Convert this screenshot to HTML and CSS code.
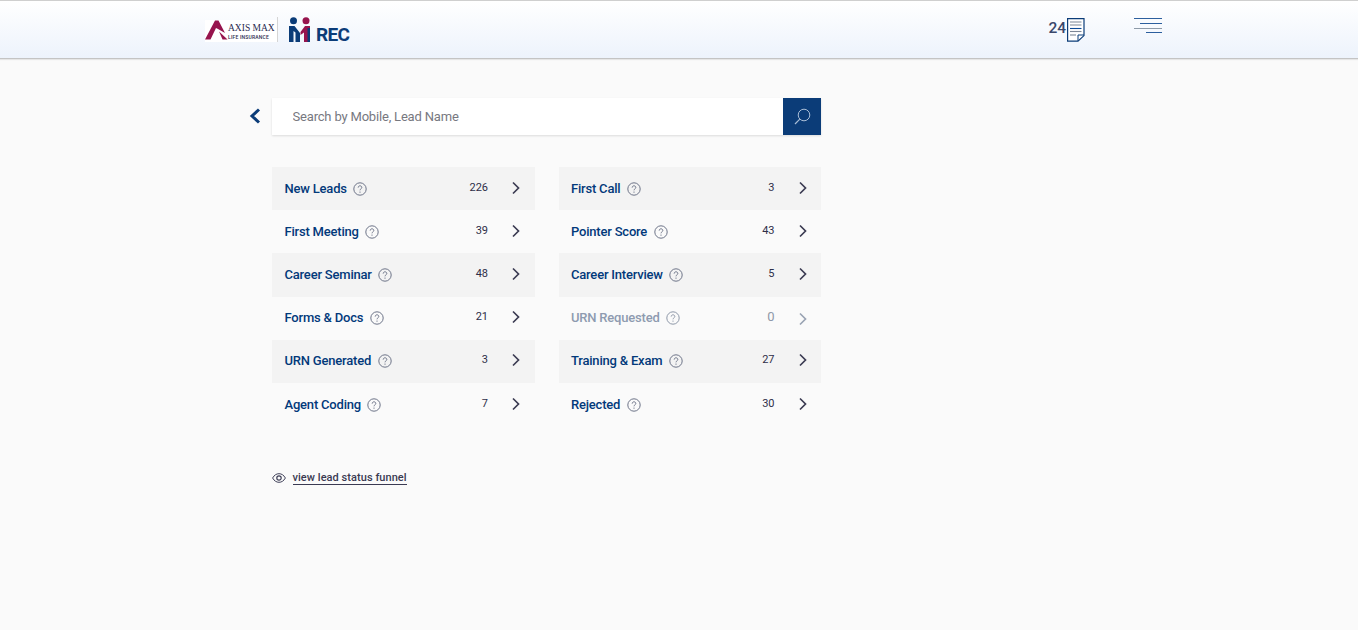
FILE: index.html
```html
<!DOCTYPE html>
<html lang="en">
<head>
<meta charset="utf-8">
<title>Leads</title>
<link rel="stylesheet" href="styles.css">
</head>
<body>
<svg class="defs" width="0" height="0" aria-hidden="true">
  <defs>
    <symbol id="help" viewBox="0 0 14 14">
      <circle cx="7" cy="7" r="6.2" fill="none" stroke="currentColor" stroke-width="1"/>
      <path d="M5.200 5.600C5.200 4.500 6 3.800 7 3.800s1.800.7 1.800 1.700c0 1.300-1.800 1.400-1.800 2.800" fill="none" stroke="currentColor" stroke-width="1"/>
      <circle cx="7" cy="10.100" r=".7" fill="currentColor"/>
    </symbol>
    <symbol id="chev" viewBox="0 0 10 14">
      <path d="M2 1.500 7.500 7 2 12.500" fill="none" stroke="currentColor" stroke-width="1.700"/>
    </symbol>
  </defs>
</svg>
<header class="topbar">
  <div class="brand">
    <div class="axis">
      <svg class="axis-mark" width="23" height="20" viewBox="0 0 23 20"><path d="M0 19.500 10 .5h3.500L20 13l-7-4-2-1-5.500 11.500z" fill="#97144d"/><path d="M14 11.500l8.500 8H17.500z" fill="#97144d"/></svg>
      <div class="axis-text">
        <span class="axis-name">AXIS MAX</span>
        <span class="axis-sub">LIFE INSURANCE</span>
      </div>
    </div>
    <div class="rec">
      <svg width="24" height="25" viewBox="0 0 24 25"><circle cx="4.500" cy="3.800" r="3.500" fill="#0b3c78"/><circle cx="17" cy="3.800" r="3.500" fill="#97144d"/><path d="M0 9h5.500l5.500 7v9H6.500V15.500L4.500 14v11H0z" fill="#0b3c78"/><path d="M21 9h-5l-4.500 6v3l3.500-2.500V25h6z" fill="#97144d"/><path d="M18.500 11H21v14h-2.500z" fill="#0b3c78"/></svg>
      <span class="rec-text">REC</span>
    </div>
  </div>
  <div class="tools">
    <div class="doc-count">
      <span class="count">24</span>
      <svg width="18" height="24" viewBox="0 0 18 24"><path d="M.6.6h16.400v17l-6 5.600H.6z" fill="#fff" stroke="#0b3c78" stroke-width="1.200"/><path d="M11 23v-6h6" fill="none" stroke="#0b3c78"/><path d="M3 4h11.500M3 7h11.500" stroke="#7d8796" stroke-width="1.100"/><path d="M3 10.500h11.500" stroke="#0b4a96" stroke-width="1.100"/><path d="M3 13.500h11.500" stroke="#7d8796" stroke-width="1.100"/><path d="M3 17h6" stroke="#7d8796" stroke-width="1.100"/></svg>
    </div>
    <svg class="menu" width="28" height="16" viewBox="0 0 28 16"><path d="M0 .5h28" stroke="#2c5f9e"/><path d="M6 5.500h22" stroke="#2c5f9e"/><path d="M0 10.500h28" stroke="#8d9aa8"/><path d="M12 14.500h16" stroke="#2c5f9e"/></svg>
  </div>
</header>
<main class="content">
  <div class="search-row">
    <a class="back" href="#"><svg width="12" height="16" viewBox="0 0 12 16"><path d="M10 1.500 3 8l7 6.500" fill="none" stroke="#0b3c78" stroke-width="3"/></svg></a>
    <div class="search">
      <input class="search-input" type="text" placeholder="Search by Mobile, Lead Name">
      <button class="search-btn" type="button"><svg width="17" height="17" viewBox="0 0 17 17"><circle cx="10" cy="7" r="5.800" fill="none" stroke="#a9bdd6" stroke-width="1"/><path d="M5.800 11.200 1 16" stroke="#a9bdd6" stroke-width="1.200"/></svg></button>
    </div>
  </div>
  <div class="grid">
    <a class="row shade"><span class="label">New Leads</span><svg class="help"><use href="#help"/></svg><span class="num">226</span><svg class="chev"><use href="#chev"/></svg></a>
    <a class="row shade"><span class="label">First Call</span><svg class="help"><use href="#help"/></svg><span class="num">3</span><svg class="chev"><use href="#chev"/></svg></a>
    <a class="row"><span class="label">First Meeting</span><svg class="help"><use href="#help"/></svg><span class="num">39</span><svg class="chev"><use href="#chev"/></svg></a>
    <a class="row"><span class="label">Pointer Score</span><svg class="help"><use href="#help"/></svg><span class="num">43</span><svg class="chev"><use href="#chev"/></svg></a>
    <a class="row shade"><span class="label">Career Seminar</span><svg class="help"><use href="#help"/></svg><span class="num">48</span><svg class="chev"><use href="#chev"/></svg></a>
    <a class="row shade"><span class="label">Career Interview</span><svg class="help"><use href="#help"/></svg><span class="num">5</span><svg class="chev"><use href="#chev"/></svg></a>
    <a class="row"><span class="label">Forms &amp; Docs</span><svg class="help"><use href="#help"/></svg><span class="num">21</span><svg class="chev"><use href="#chev"/></svg></a>
    <a class="row disabled"><span class="label">URN Requested</span><svg class="help"><use href="#help"/></svg><span class="num">0</span><svg class="chev"><use href="#chev"/></svg></a>
    <a class="row shade"><span class="label">URN Generated</span><svg class="help"><use href="#help"/></svg><span class="num">3</span><svg class="chev"><use href="#chev"/></svg></a>
    <a class="row shade"><span class="label">Training &amp; Exam</span><svg class="help"><use href="#help"/></svg><span class="num">27</span><svg class="chev"><use href="#chev"/></svg></a>
    <a class="row"><span class="label">Agent Coding</span><svg class="help"><use href="#help"/></svg><span class="num">7</span><svg class="chev"><use href="#chev"/></svg></a>
    <a class="row"><span class="label">Rejected</span><svg class="help"><use href="#help"/></svg><span class="num">30</span><svg class="chev"><use href="#chev"/></svg></a>
  </div>
  <div class="funnel">
    <svg width="14" height="10" viewBox="0 0 14 10"><path d="M.6 5C2.300 2 4.500.7 7 .7S11.700 2 13.400 5C11.700 8 9.500 9.300 7 9.300S2.300 8 .6 5z" fill="none" stroke="#3f4058" stroke-width="1"/><circle cx="7" cy="5" r="2.200" fill="none" stroke="#3f4058" stroke-width="1.200"/></svg>
    <a class="funnel-link" href="#">view lead status funnel</a>
  </div>
</main>
</body>
</html>
```
FILE: styles.css
```css
* { box-sizing: border-box; }
html, body { margin: 0; height: 100%; }
body {
  background: #fafafa;
  font-family: Roboto, "Liberation Sans", sans-serif;
  overflow: hidden;
}
.defs { display: block; height: 0; }
.topbar {
  height: 59px;
  border-top: 1px solid #cfcfcf;
  border-bottom: 1px solid #c4c4c4;
  background: linear-gradient(#ffffff, #edf3fc);
  box-shadow: 0 1px 1px rgba(0, 0, 0, .08);
  display: flex;
  justify-content: space-between;
  padding: 0 196px 0 202px;
}
.brand { display: flex; align-items: flex-start; padding-top: 16px; }
.axis {
  display: flex;
  align-items: flex-start;
  width: 76px;
  height: 25px;
  background: #fff;
  border-right: 1px solid #d5d5d5;
  padding: 3px 0 0 3px;
  background-clip: content-box;
}
.axis-mark { flex: none; }
.axis-text { display: flex; flex-direction: column; align-items: flex-start; margin-left: 0; padding-top: 3px; }
.axis-name {
  font-family: "Liberation Serif", serif;
  font-size: 9.500px;
  line-height: 10px;
  color: #2b2b4f;
  white-space: nowrap;
}
.axis-sub {
  font-size: 5px;
  line-height: 6px;
  margin-top: 1px;
  letter-spacing: .2px;
  font-weight: 500;
  color: #2b2b4f;
  white-space: nowrap;
}
.rec { display: flex; align-items: flex-end; margin-left: 11px; }
.rec-text {
  font-size: 19px;
  font-weight: 700;
  line-height: 18px;
  color: #0b3c78;
  margin-left: 3px;
  margin-bottom: -2px;
  letter-spacing: -.7px;
}
.tools { display: flex; align-items: flex-start; gap: 49px; }
.doc-count { display: flex; align-items: center; padding-top: 17px; }
.count { font-size: 15.500px; font-weight: 500; color: #3a476b; line-height: 20px; margin-right: 1px; margin-bottom: 4px; }
.menu { margin-top: 17px; }
.content { padding: 39px 0 0 250px; width: 821px; }
.search-row { display: flex; align-items: center; }
.back { width: 22px; height: 16px; display: block; line-height: 0; flex: none; margin-top: -2px; margin-left: -1px; padding-right: 1px; box-sizing: content-box; }
.search {
  flex: 1;
  height: 37px;
  display: flex;
  background: #fff;
  box-shadow: 0 1px 2px rgba(0, 0, 0, .12);
}
.search-input {
  flex: 1;
  min-width: 0;
  border: 0;
  outline: 0;
  background: transparent;
  padding: 0 0 1px 20.500px;
  font-family: Roboto, "Liberation Sans", sans-serif;
  font-size: 13px;
  letter-spacing: -.18px;
  color: #333;
}
.search-input::placeholder { color: #77787f; opacity: 1; }
.search-btn {
  width: 38px;
  border: 0;
  padding: 0;
  background: #0b3c78;
  display: flex;
  align-items: center;
  justify-content: center;
}
.grid {
  display: grid;
  grid-template-columns: 1fr 1fr;
  column-gap: 24px;
  grid-auto-rows: 43.200px;
  margin: 32px 0 0 22px;
}
.row {
  display: flex;
  align-items: center;
  padding: 0 13.500px 0 12.500px;
  color: #02397a;
}
.shade { background: #f3f3f3; }
.label { font-size: 13px; font-weight: 500; letter-spacing: -.2px; line-height: 16px; white-space: nowrap; }
.help { width: 14px; height: 14px; margin-left: 6.500px; color: #6d7488; flex: none; }
.num {
  margin-left: auto;
  font-size: 11px;
  line-height: 14px;
  color: #2e2e48;
  position: relative;
  top: -1px;
}
.chev { width: 10px; height: 14px; margin-left: 23px; margin-right: 0; color: #3b3b52; flex: none; position: relative; top: -1px; }
.disabled .label { color: #8e9bb0; }
.disabled .help { color: #8e98a8; }
.disabled .num { color: #8e98a8; font-size: 13px; }
.disabled .chev { color: #9aa3b3; top: 1px; }
.funnel { display: flex; align-items: center; margin: 45px 0 0 22px; }
.funnel-link {
  margin-left: 6.500px;
  font-size: 11px;
  font-weight: 500;
  letter-spacing: .05px;
  line-height: 13px;
  color: #3a3a52;
  text-decoration: none;
  border-bottom: 1px solid #3a3a52;
}
```
